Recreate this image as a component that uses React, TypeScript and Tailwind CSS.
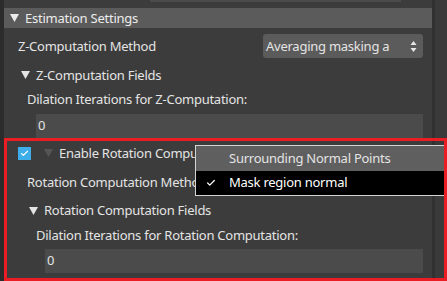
import { Check } from "lucide-react";

const Tri = ({ className = "" }: { className?: string }) => (
  <svg width="9" height="8" viewBox="0 0 9 8" className={className}>
    <polygon points="0,0 9,0 4.5,8" fill="currentColor" />
  </svg>
);

const Updown = () => (
  <svg width="7" height="11" viewBox="0 0 7 11">
    <polygon points="3.5,0 6.5,4 0.5,4" fill="#e8e8e8" />
    <polygon points="0.5,7 6.5,7 3.5,11" fill="#e8e8e8" />
  </svg>
);

const Input = ({ className = "" }: { className?: string }) => (
  <div className={`h-6 mr-[9px] bg-[#4b4b4b] flex items-center pl-[2px] ${className}`}>0</div>
);

export default function App() {
  return (
    <div
      className="relative w-[447px] h-[281px] overflow-hidden bg-[#3a3a3a] text-[#e4e4e4] text-[13px] tracking-[-0.25px] flex"
      style={{ fontFamily: '"Noto Sans", "Open Sans", sans-serif' }}
    >
      <div className="w-1 bg-[#2c2c2c]" />
      <div className="w-[428px] flex flex-col bg-[#3c3c3c]">
        <div className="h-[2px] ml-[146px] w-[251px] bg-[#4b4b4b]" />
        <div className="mt-[6px] h-5 bg-[#5b5b5b] flex items-center pl-[6px] gap-[6px] text-[#ececec]">
          <Tri />
          <span className="mt-px">Estimation Settings</span>
        </div>
        <div className="mt-[6px] h-6 flex items-center justify-between pl-[14px] pr-[9px]">
          <span className="mt-[2px]">Z-Computation Method</span>
          <div className="w-[160px] h-6 rounded-[3px] bg-[#5b5b5b] flex items-center justify-between pl-[3px] pr-[6px]">
            <span className="mt-px">Averaging masking a</span>
            <Updown />
          </div>
        </div>
        <div className="mt-[7px] h-5 flex items-center pl-[17px] gap-[6px]">
          <Tri />
          <span className="mt-px">Z-Computation Fields</span>
        </div>
        <div className="mt-1 h-5 flex items-center pl-[23px]">
          <span className="mt-[2px]">Dilation Iterations for Z-Computation:</span>
        </div>
        <Input className="mt-[5px] ml-[32px]" />
        <div className="mt-[5px] h-5 flex items-center pl-[14px]">
          <div className="w-[13px] h-[13px] bg-[#3daee9] flex items-center justify-center">
            <Check size={9} strokeWidth={3} color="#fff" />
          </div>
          <Tri className="ml-[13px] text-[#555]" />
          <span className="ml-[6px] mt-px">Enable Rotation Computation</span>
        </div>
        <div className="mt-2 h-6 flex items-center justify-between pl-[23px] pr-[9px]">
          <span>Rotation Computation Method</span>
          <div className="w-[160px] h-6 rounded-[3px] bg-[#5b5b5b]" />
        </div>
        <div className="mt-[6px] h-5 flex items-center pl-[25px] gap-[6px]">
          <Tri />
          <span>Rotation Computation Fields</span>
        </div>
        <div className="mt-1 h-5 flex items-center pl-[32px]">
          <span className="mt-[2px]">Dilation Iterations for Rotation Computation:</span>
        </div>
        <Input className="mt-1 ml-[41px]" />
      </div>
      <div className="w-[3px] bg-[#313131]" />
      <div className="flex-1 bg-[#3a3a3a]" />

      <div className="absolute left-[195px] top-[145px] w-[250px] border-y border-l border-[#d4d4d4] bg-black">
        <div className="h-[25px] bg-[#5f5f5f] flex items-center pl-[33px]">Surrounding Normal Points</div>
        <div className="h-[24px] bg-black flex items-center text-white">
          <Check size={10} strokeWidth={3} className="ml-[10px] mr-[13px]" />
          <span>Mask region normal</span>
        </div>
      </div>

      <div className="absolute left-1 top-[138px] w-[443px] h-[143px] border-[3px] border-[#ea1c24] pointer-events-none" />
    </div>
  );
}
